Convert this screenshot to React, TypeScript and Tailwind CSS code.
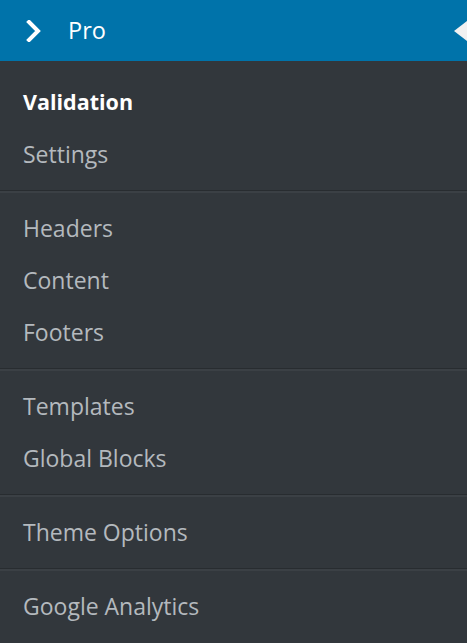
const groups: { label: string; active?: boolean }[][] = [
  [{ label: "Validation", active: true }, { label: "Settings" }],
  [{ label: "Headers" }, { label: "Content" }, { label: "Footers" }],
  [{ label: "Templates" }, { label: "Global Blocks" }],
  [{ label: "Theme Options" }],
  [{ label: "Google Analytics" }],
];

export default function App() {
  return (
    <div
      className="w-[467px] h-[643px] bg-[#32373c] overflow-hidden"
      style={{ fontFamily: '"Open Sans", "Noto Sans", sans-serif' }}
    >
      <div className="relative h-[61px] bg-[#0073aa] flex items-center text-white">
        <svg className="ml-[26px] w-[16px] h-[22px]" viewBox="0 0 16 22" fill="none">
          <path d="M3 2 L12 11 L3 20" stroke="#fff" strokeWidth="4" strokeLinecap="square" strokeLinejoin="miter" />
        </svg>
        <span className="ml-[26px] text-[23.5px] leading-none">Pro</span>
        <div className="absolute right-0 top-[21px] w-0 h-0 border-y-[10px] border-y-transparent border-r-[13px] border-r-[#f1f1f1]" />
      </div>
      {groups.map((g, gi) => (
        <div
          key={gi}
          className={`${gi === 0 ? "pt-[15px]" : "pt-[11px] border-t border-t-[#282c30] shadow-[inset_0_2px_0_#3b4045]"} pb-[10px]`}
        >
          {g.map((it) => (
            <div
              key={it.label}
              className={`h-[52px] flex items-center pl-[23px] ${it.active ? "text-white font-bold text-[21.5px]" : "text-[#b4b9be] text-[23px]"}`}
            >
              {it.label}
            </div>
          ))}
        </div>
      ))}
    </div>
  );
}
